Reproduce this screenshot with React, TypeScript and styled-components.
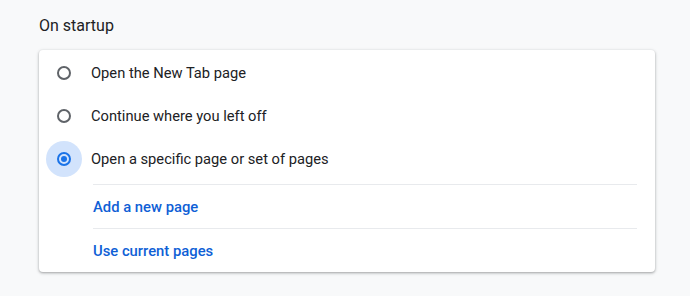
import React from "react";
import styled, { createGlobalStyle } from "styled-components";

const GlobalStyle = createGlobalStyle`
  html, body {
    margin: 0;
    padding: 0;
    background: #f8f9fa;
    font-family: Roboto, "Liberation Sans", Arial, sans-serif;
    -webkit-font-smoothing: antialiased;
  }
`;

const Page = styled.div`
  padding: 16px 35px 24px 39px;
`;

const Title = styled.h2`
  margin: 0 0 14px;
  font-size: 16px;
  font-weight: 400;
  color: #202124;
  line-height: 20px;
`;

const Card = styled.div`
  background: #fff;
  border-radius: 4px;
  box-shadow: 0 1px 2px rgba(60, 64, 67, 0.3), 0 1px 3px 1px rgba(60, 64, 67, 0.15);
  padding-top: 1px;
`;

const Row = styled.label`
  display: flex;
  align-items: center;
  height: 43px;
  cursor: pointer;
`;

const RadioWrap = styled.span<{ $checked: boolean }>`
  width: 36px;
  height: 36px;
  margin-left: 7px;
  margin-right: 8px;
  display: flex;
  align-items: center;
  justify-content: center;
  border-radius: 50%;
  background: ${(p) => (p.$checked ? "#d2e3fc" : "transparent")};
`;

const Ring = styled.span<{ $checked: boolean }>`
  box-sizing: border-box;
  width: 14px;
  height: 14px;
  border-radius: 50%;
  border: 2px solid ${(p) => (p.$checked ? "#1a73e8" : "#5f6368")};
  display: flex;
  align-items: center;
  justify-content: center;

  &::after {
    content: "";
    width: 6px;
    height: 6px;
    border-radius: 50%;
    background: ${(p) => (p.$checked ? "#1a73e8" : "transparent")};
  }
`;

const RowText = styled.span`
  font-size: 14.7px;
  color: #202124;
  padding-left: 1px;
`;

const SubList = styled.div`
  margin: 4px 18px 0 54px;
`;

const LinkRow = styled.div`
  height: 44px;
  display: flex;
  align-items: center;
  border-top: 1px solid #e8eaed;
  box-sizing: border-box;
`;

const LinkText = styled.a`
  font-size: 14.8px;
  font-weight: 500;
  color: #0f5fd6;
  text-decoration: none;
  cursor: pointer;
`;

const options = [
  { label: "Open the New Tab page", checked: false },
  { label: "Continue where you left off", checked: false },
  { label: "Open a specific page or set of pages", checked: true },
];

export default function App() {
  return (
    <>
      <GlobalStyle />
      <Page>
        <Title>On startup</Title>
        <Card>
          {options.map((o) => (
            <Row key={o.label}>
              <RadioWrap $checked={o.checked}>
                <Ring $checked={o.checked} />
              </RadioWrap>
              <RowText>{o.label}</RowText>
            </Row>
          ))}
          <SubList>
            <LinkRow>
              <LinkText>Add a new page</LinkText>
            </LinkRow>
            <LinkRow>
              <LinkText>Use current pages</LinkText>
            </LinkRow>
          </SubList>
        </Card>
      </Page>
    </>
  );
}
